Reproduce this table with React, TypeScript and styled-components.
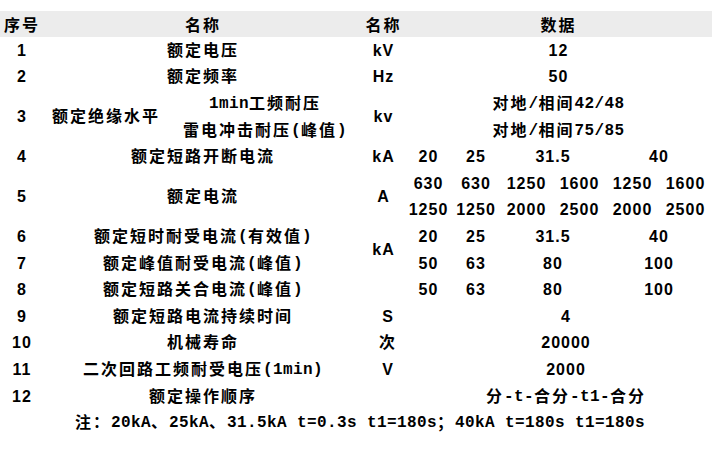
import * as React from 'react';
import styled, { createGlobalStyle } from 'styled-components';

const GlobalStyle = createGlobalStyle`
    html,
    body {
        margin: 0;
        padding: 0;
        background: #ffffff;
    }

    body {
        font-family: 'Liberation Sans', 'Noto Sans CJK SC', sans-serif;
        font-weight: 700;
        font-size: 16px;
        color: #000000;
    }
`;

// 数据区 6 列 (20/25/31.5/40 及 630/1250 ...)
const sub = ['5', '6', '7', '8', '9', '10'];

const App = () => {
    return (
        <>
            <GlobalStyle />
            <Sheet>
                <Head $col="1">序号</Head>
                <Head $col="2 / 4">名称</Head>
                <Head $col="4">名称</Head>
                <Head $col="5 / 11">数据</Head>

                {/* 1 */}
                <Num $col="1" $row="2">1</Num>
                <Cell $col="2 / 4" $row="2">额定电压</Cell>
                <Num $col="4" $row="2">kV</Num>
                <Num $col="5 / 11" $row="2">12</Num>

                {/* 2 */}
                <Num $col="1" $row="3">2</Num>
                <Cell $col="2 / 4" $row="3">额定频率</Cell>
                <Num $col="4" $row="3">Hz</Num>
                <Num $col="5 / 11" $row="3">50</Num>

                {/* 3 */}
                <Num $col="1" $row="4 / 6">3</Num>
                <Cell $col="2" $row="4 / 6">额定绝缘水平</Cell>
                <Cell $col="3" $row="4">
                    <Latin>1min</Latin>工频耐压
                </Cell>
                <Cell $col="3" $row="5">
                    雷电冲击耐压<Latin>(</Latin>峰值<Latin>)</Latin>
                </Cell>
                <Num $col="4" $row="4 / 6">kv</Num>
                <Cell $col="5 / 11" $row="4">
                    对地<Latin>/</Latin>相间<Latin>42/48</Latin>
                </Cell>
                <Cell $col="5 / 11" $row="5">
                    对地<Latin>/</Latin>相间<Latin>75/85</Latin>
                </Cell>

                {/* 4 */}
                <Num $col="1" $row="6">4</Num>
                <Cell $col="2 / 4" $row="6">额定短路开断电流</Cell>
                <Num $col="4" $row="6">kA</Num>
                <Num $col="5" $row="6">20</Num>
                <Num $col="6" $row="6">25</Num>
                <Num $col="7 / 9" $row="6">31.5</Num>
                <Num $col="9 / 11" $row="6">40</Num>

                {/* 5 */}
                <Num $col="1" $row="7 / 9">5</Num>
                <Cell $col="2 / 4" $row="7 / 9">额定电流</Cell>
                <Num $col="4" $row="7 / 9">A</Num>
                {['630', '630', '1250', '1600', '1250', '1600'].map((v, i) => (
                    <Num key={`a${i}`} $col={sub[i]} $row="7">
                        {v}
                    </Num>
                ))}
                {['1250', '1250', '2000', '2500', '2000', '2500'].map((v, i) => (
                    <Num key={`b${i}`} $col={sub[i]} $row="8">
                        {v}
                    </Num>
                ))}

                {/* 6 */}
                <Num $col="1" $row="9">6</Num>
                <Cell $col="2 / 4" $row="9">
                    额定短时耐受电流<Latin>(</Latin>有效值<Latin>)</Latin>
                </Cell>
                <Num $col="4" $row="9 / 11">kA</Num>
                <Num $col="5" $row="9">20</Num>
                <Num $col="6" $row="9">25</Num>
                <Num $col="7 / 9" $row="9">31.5</Num>
                <Num $col="9 / 11" $row="9">40</Num>

                {/* 7 */}
                <Num $col="1" $row="10">7</Num>
                <Cell $col="2 / 4" $row="10">
                    额定峰值耐受电流<Latin>(</Latin>峰值<Latin>)</Latin>
                </Cell>
                <Num $col="5" $row="10">50</Num>
                <Num $col="6" $row="10">63</Num>
                <Num $col="7 / 9" $row="10">80</Num>
                <Num $col="9 / 11" $row="10">100</Num>

                {/* 8 */}
                <Num $col="1" $row="11">8</Num>
                <Cell $col="2 / 4" $row="11">
                    额定短路关合电流<Latin>(</Latin>峰值<Latin>)</Latin>
                </Cell>
                <Num $col="5" $row="11">50</Num>
                <Num $col="6" $row="11">63</Num>
                <Num $col="7 / 9" $row="11">80</Num>
                <Num $col="9 / 11" $row="11">100</Num>

                {/* 9 */}
                <Num $col="1" $row="12">9</Num>
                <Cell $col="2 / 4" $row="12">额定短路电流持续时间</Cell>
                <Num $col="4" $row="12" $shift={9}>S</Num>
                <Num $col="5 / 11" $row="12" $shift={15}>4</Num>

                {/* 10 */}
                <Num $col="1" $row="13">10</Num>
                <Cell $col="2 / 4" $row="13">机械寿命</Cell>
                <Cell $col="4" $row="13" $shift={9}>次</Cell>
                <Num $col="5 / 11" $row="13" $shift={15}>20000</Num>

                {/* 11 */}
                <Num $col="1" $row="14">11</Num>
                <Cell $col="2 / 4" $row="14">
                    二次回路工频耐受电压<Latin>(1min)</Latin>
                </Cell>
                <Num $col="4" $row="14" $shift={9}>V</Num>
                <Num $col="5 / 11" $row="14" $shift={15}>2000</Num>

                {/* 12 */}
                <Num $col="1" $row="15">12</Num>
                <Cell $col="2 / 4" $row="15">额定操作顺序</Cell>
                <Cell $col="5 / 11" $row="15" $shift={15}>
                    分<Latin>-t-</Latin>合分<Latin>-t1-</Latin>合分
                </Cell>

                <Cell $col="1 / 11" $row="16" $shift={8}>
                    注：<Latin>20kA</Latin>、<Latin>25kA</Latin>、<Latin>31.5kA t=0.3s t1=180s</Latin>；
                    <Latin>40kA t=180s t1=180s</Latin>
                </Cell>
            </Sheet>
        </>
    );
};

export default App;

const Sheet = styled.div`
    display: grid;
    grid-template-columns: 44px 124px 194px 43px 47px 48px 53px 53px 53px 53px;
    grid-template-rows: 26px repeat(15, 26.6px);

    width: 712px;
    padding-top: 11px;
`;

const Head = styled.div<{ $col: string }>`
    grid-column: ${(p) => p.$col};
    grid-row: 1;

    display: flex;
    justify-content: center;
    align-items: center;

    background-color: #ececec;

    font-family: 'Noto Sans CJK SC', sans-serif;
    line-height: 20px;
    letter-spacing: 2px;
`;

const Cell = styled.div<{ $col: string; $row: string; $shift?: number }>`
    grid-column: ${(p) => p.$col};
    grid-row: ${(p) => p.$row};

    display: flex;
    justify-content: center;
    align-items: center;

    padding-top: 1px;
    padding-left: ${(p) => p.$shift ?? 0}px;

    white-space: pre;
    line-height: 20px;
    letter-spacing: 2px;
`;

const Num = styled(Cell)`
    letter-spacing: 1px;
`;

const Latin = styled.span`
    font-family: 'Liberation Mono', 'Noto Sans CJK SC', monospace;
    letter-spacing: 0.4px;
`;
